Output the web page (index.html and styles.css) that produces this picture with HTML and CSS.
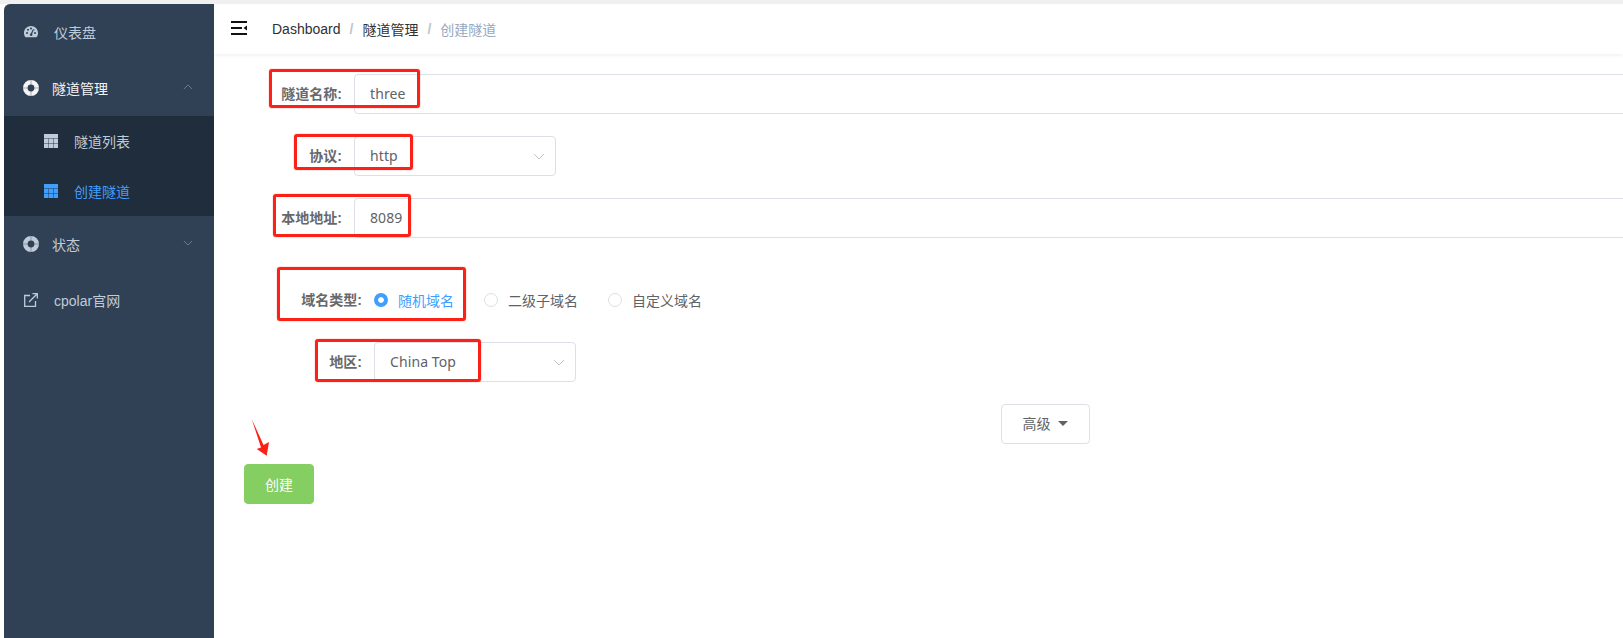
FILE: index.html
```html
<!DOCTYPE html>
<html lang="zh-CN">
<head>
<meta charset="utf-8">
<title>创建隧道</title>
<link rel="stylesheet" href="styles.css">
</head>
<body>
<div class="app">
  <aside class="sidebar">
    <a class="menu-item top">
      <svg class="ico" viewBox="0 0 14 12"><path fill-rule="evenodd" d="M7 0C3.100 0 0 3 0 6.900c0 1.600.5 3 1.300 4.100.2.200.4.300.7.300h10c.3 0 .5-.1.7-.3.8-1.100 1.300-2.500 1.300-4.100C14 3 10.900 0 7 0zM3 8a1 1 0 1 1 0-2 1 1 0 0 1 0 2zm1-3.200a1 1 0 1 1 0-2 1 1 0 0 1 0 2zm3-1.300a1 1 0 1 1 0-2 1 1 0 0 1 0 2zM8.200 9.500a1.400 1.400 0 0 1-2.400-1.200c.2-.4.600-.7 1-.7l2-4.200c.1-.2.400-.3.600-.2.200.1.300.4.200.6L8.200 8c.3.400.3 1 0 1.500zM11 8a1 1 0 1 1 0-2 1 1 0 0 1 0 2zm-1-3.200a.9.900 0 0 1 0-1.600 1 1 0 0 1 0 1.600z"/></svg>
      <span class="menu-text">仪表盘</span>
    </a>
    <div class="menu-item parent open">
      <svg class="ico buoy" viewBox="0 0 16 16"><circle class="ring" cx="8" cy="8" r="5.700"/><path class="slit" d="M8 0v5M8 11v5M0 8h5M11 8h5"/></svg>
      <span class="menu-text">隧道管理</span>
      <svg class="chev" viewBox="0 0 12 7"><path d="M1 6l5-5 5 5" fill="none" stroke="currentColor"/></svg>
    </div>
    <div class="submenu">
      <a class="sub-item">
        <svg class="ico tbl" viewBox="0 0 14 14"><path d="M0 0h14v14H0z"/><path class="grid" d="M0 4.500h14M0 9.500h14M4.500 4.500V14M9.500 4.500V14"/></svg>
        <span class="sub-text">隧道列表</span>
      </a>
      <a class="sub-item active">
        <svg class="ico tbl" viewBox="0 0 14 14"><path d="M0 0h14v14H0z"/><path class="grid" d="M0 4.500h14M0 9.500h14M4.500 4.500V14M9.500 4.500V14"/></svg>
        <span class="sub-text">创建隧道</span>
      </a>
    </div>
    <div class="menu-item parent">
      <svg class="ico buoy" viewBox="0 0 16 16"><circle class="ring" cx="8" cy="8" r="5.700"/><path class="slit" d="M8 0v5M8 11v5M0 8h5M11 8h5"/></svg>
      <span class="menu-text">状态</span>
      <svg class="chev" viewBox="0 0 12 7"><path d="M1 1l5 5 5-5" fill="none" stroke="currentColor"/></svg>
    </div>
    <a class="menu-item top">
      <svg class="ico" viewBox="0 0 14 14"><path d="M11.500 8v5.300H.7V2.500H6" fill="none" stroke="currentColor" stroke-width="1.300"/><path d="M5 9l8-8M8.500 .7h4.800v4.800" fill="none" stroke="currentColor" stroke-width="1.300"/></svg>
      <span class="menu-text">cpolar官网</span>
    </a>
  </aside>
  <main class="main">
    <header class="navbar">
      <svg class="hamburger" viewBox="0 0 16 14"><path d="M0 0h16v2H0zM0 6h11v2H0zM0 12h16v2H0zM16 4.500v5l-3.500-2.500z"/></svg>
      <nav class="crumbs">
        <span class="crumb">Dashboard</span><span class="sep">/</span>
        <span class="crumb">隧道管理</span><span class="sep">/</span>
        <span class="crumb last">创建隧道</span>
      </nav>
    </header>
    <form class="form">
      <div class="row">
        <label class="label">隧道名称:</label>
        <div class="input wide">three</div>
      </div>
      <div class="row">
        <label class="label">协议:</label>
        <div class="input select">http
          <svg class="arrow" viewBox="0 0 12 7"><path d="M1 1l5 5 5-5" fill="none" stroke="currentColor"/></svg>
        </div>
      </div>
      <div class="row">
        <label class="label">本地地址:</label>
        <div class="input wide">8089</div>
      </div>
      <div class="row radios">
        <label class="label">域名类型:</label>
        <span class="radio checked"><i class="dot"></i>随机域名</span>
        <span class="radio"><i class="dot"></i>二级子域名</span>
        <span class="radio"><i class="dot"></i>自定义域名</span>
      </div>
      <div class="row region">
        <label class="label">地区:</label>
        <div class="input select">China Top
          <svg class="arrow" viewBox="0 0 12 7"><path d="M1 1l5 5 5-5" fill="none" stroke="currentColor"/></svg>
        </div>
      </div>
      <div class="advanced-row">
        <button type="button" class="btn-adv">高级<i class="caret"></i></button>
      </div>
      <button type="button" class="btn-create">创建</button>
    </form>
  </main>
</div>
<div class="mark m1"></div>
<div class="mark m2"></div>
<div class="mark m3"></div>
<div class="mark m4"></div>
<div class="mark m5"></div>
<svg class="pointer" viewBox="0 0 20 40"><path d="M.7 1L12.500 27 18 24 15.700 37.700 5.700 31 10 29.500z" fill="#fb2116"/></svg>
</body>
</html>
```
FILE: styles.css
```css
* { box-sizing: border-box; }
html, body { margin: 0; height: 100%; overflow: hidden; background: #fff; }
body {
  font-family: "Liberation Sans", "Noto Sans CJK SC", sans-serif;
  font-size: 14px;
  color: #606266;
}
.app { display: flex; height: 638px; padding-top: 4px; padding-left: 4px; background: linear-gradient(#f0f0f0 0 4px, #fff 4px); }
.sidebar { width: 210px; flex: none; background: #304156; border-top-left-radius: 6px; color: #bfcbd9; overflow: hidden; }
.menu-item { display: flex; align-items: center; height: 56px; position: relative; }
.menu-item.top { padding-left: 20px; }
.menu-item.parent { padding-left: 19px; }
.menu-item.open { color: #f4f4f5; }
.ico { fill: currentColor; flex: none; }
.top .ico { width: 14px; height: 14px; }
.menu-text { margin-left: 16px; }
.parent .menu-text { margin-left: 13px; }
.buoy { width: 16px; height: 16px; }
.ring { fill: none; stroke: currentColor; stroke-width: 4.600; }
.slit { fill: none; stroke: #304156; stroke-opacity: .4; stroke-width: 1; }
.chev { width: 10px; height: 6px; position: absolute; right: 21px; top: 24px; color: #7a8797; }
.submenu { background: #1f2d3d; }
.sub-item { display: flex; align-items: center; height: 50px; padding-left: 40px; }
.sub-item .tbl { width: 14px; height: 14px; }
.grid { fill: none; stroke: #1f2d3d; stroke-opacity: .45; stroke-width: 1; }
.sub-text { margin-left: 16px; }
.active { color: #409eff; }
.main { flex: 1; min-width: 0; overflow: hidden; }
.navbar { height: 50px; display: flex; align-items: center; padding-left: 17px; box-shadow: 0 1px 4px rgba(0,21,41,.08); }
.hamburger { width: 16px; height: 14px; fill: #111; margin-bottom: 2px; }
.crumbs { margin-left: 25px; display: flex; align-items: center; color: #303133; padding-bottom: 1px; }
.sep { color: #c0c4cc; margin: 0 9px; font-weight: 700; }
.last { color: #97a8be; }
.form { display: block; width: 1662px; padding-top: 20px; }
.row { display: flex; align-items: center; margin-bottom: 22px; }
.label { width: 140px; flex: none; padding-right: 12px; padding-bottom: 2px; text-align: right; font-weight: 700; color: #66686c; }
.input { height: 40px; border: 1px solid #dcdfe6; border-radius: 4px; padding: 0 15px; line-height: 38px; font-family: "Noto Sans", "Noto Sans CJK SC", sans-serif; letter-spacing: .1px; position: relative; }
.wide { flex: 1; }
.select { width: 202px; }
.arrow { width: 12px; height: 7px; position: absolute; right: 10px; top: 16px; color: #c0c4cc; }
.radios { margin: 42px 0 0 20px; height: 40px; }
.radio { display: inline-flex; align-items: center; margin-right: 30px; }
.dot { width: 14px; height: 14px; border: 1px solid #dcdfe6; border-radius: 50%; margin-right: 10px; flex: none; }
.checked { color: #409eff; }
.checked .dot { background: #409eff; border: 4.500px solid #409eff; box-shadow: inset 0 0 0 3px #fff; }
.region { margin: 22px 0 0 20px; }
.advanced-row { display: flex; justify-content: center; margin-top: 22px; }
.btn-adv { width: 89px; height: 40px; background: #fff; border: 1px solid #dcdfe6; border-radius: 4px; font: inherit; color: #606266; display: flex; align-items: center; justify-content: center; padding: 0 0 2px; }
.caret { width: 0; height: 0; border: 5px solid transparent; border-top-color: #606266; border-bottom: 0; margin-left: 7px; }
.btn-create { display: block; margin: 20px 0 0 30px; width: 70px; height: 40px; background: #85ce61; border: 1px solid #85ce61; border-radius: 4px; color: #fff; font: inherit; }
.mark { position: absolute; border: 3px solid #fb2116; border-radius: 3px; box-shadow: 0 0 1px #fb2116; }
.m1 { left: 269px; top: 69px; width: 151px; height: 39px; }
.m2 { left: 294px; top: 134px; width: 119px; height: 36px; }
.m3 { left: 273px; top: 194px; width: 138px; height: 43px; }
.m4 { left: 277px; top: 267px; width: 189px; height: 54px; }
.m5 { left: 315px; top: 339px; width: 166px; height: 43px; }
.pointer { position: absolute; left: 251px; top: 418px; width: 20px; height: 40px; }
```
